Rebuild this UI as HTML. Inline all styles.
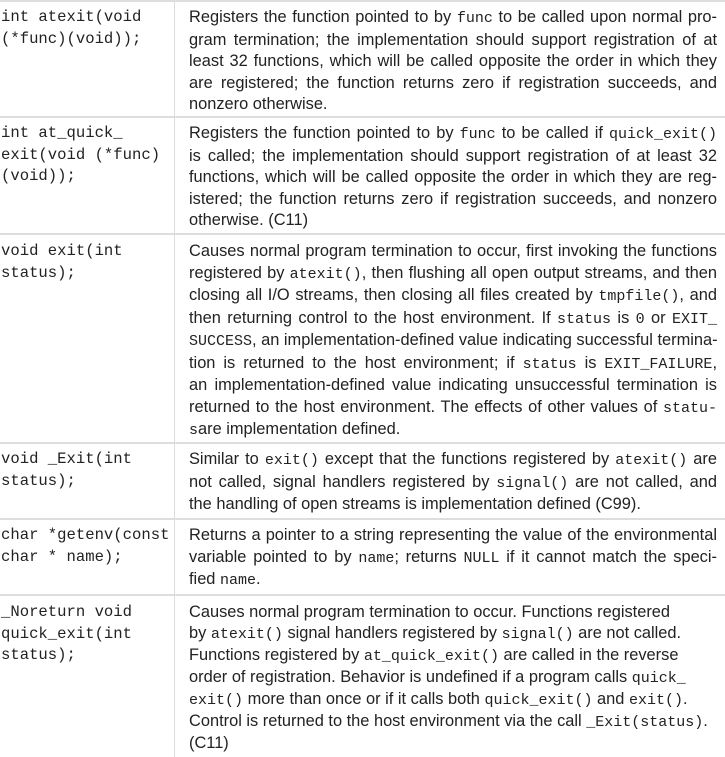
<!DOCTYPE html>
<html><head><meta charset="utf-8"><style>
*{margin:0;padding:0;box-sizing:border-box}
body{width:725px;height:757px;background:#fff;overflow:hidden;font-family:"Liberation Sans",Arial,sans-serif;color:#222}
.row{position:absolute;left:0;width:725px;border-top:2px solid #ddd}
.l{position:absolute;left:1px;top:5px;width:172px;font-family:"Liberation Mono","Courier New",monospace;font-size:15.6px;line-height:21.5px;color:#222}
.v{position:absolute;left:174px;top:0;bottom:0;border-left:1px solid #ddd}
.r{position:absolute;left:189px;top:5px;width:528px;font-size:16.4px;line-height:21.5px}
.r div{text-align:justify;text-align-last:justify;white-space:nowrap;}
.r div.e{text-align-last:left}
.r.left div{text-align-last:left}
code{font-family:"Liberation Mono","Courier New",monospace;font-size:15px}
</style></head><body>

<div class="row" style="top:0;height:116px"><div class="v"></div>
<div class="l">int atexit(void<br>(*func)(void));</div>
<div class="r">
<div>Registers the function pointed to by <code>func</code> to be called upon normal pro-</div>
<div>gram termination; the implementation should support registration of at</div>
<div>least 32 functions, which will be called opposite the order in which they</div>
<div>are registered; the function returns zero if registration succeeds, and</div>
<div class="e">nonzero otherwise.</div>
</div></div>

<div class="row" style="top:116px;height:117px"><div class="v"></div>
<div class="l">int at_quick_<br>exit(void (*func)<br>(void));</div>
<div class="r">
<div>Registers the function pointed to by <code>func</code> to be called if <code>quick_exit()</code></div>
<div>is called; the implementation should support registration of at least 32</div>
<div>functions, which will be called opposite the order in which they are reg-</div>
<div>istered; the function returns zero if registration succeeds, and nonzero</div>
<div class="e">otherwise. (C11)</div>
</div></div>

<div class="row" style="top:233px;height:209px"><div class="v"></div>
<div class="l" style="top:6px">void exit(int<br>status);</div>
<div class="r" style="top:6px">
<div>Causes normal program termination to occur, first invoking the functions</div>
<div>registered by <code>atexit()</code>, then flushing all open output streams, and then</div>
<div>closing all I/O streams, then closing all files created by <code>tmpfile()</code>, and</div>
<div>then returning control to the host environment. If <code>status</code> is <code>0</code> or <code>EXIT_</code></div>
<div><code>SUCCESS</code>, an implementation-defined value indicating successful termina-</div>
<div>tion is returned to the host environment; if <code>status</code> is <code>EXIT_FAILURE</code>,</div>
<div>an implementation-defined value indicating unsuccessful termination is</div>
<div>returned to the host environment. The effects of other values of <code>statu-</code></div>
<div class="e"><code>s</code>are implementation defined.</div>
</div></div>

<div class="row" style="top:442px;height:76px"><div class="v"></div>
<div class="l">void _Exit(int<br>status);</div>
<div class="r">
<div>Similar to <code>exit()</code> except that the functions registered by <code>atexit()</code> are</div>
<div>not called, signal handlers registered by <code>signal()</code> are not called, and</div>
<div class="e">the handling of open streams is implementation defined (C99).</div>
</div></div>

<div class="row" style="top:518px;height:76px"><div class="v"></div>
<div class="l">char *getenv(const<br>char * name);</div>
<div class="r">
<div>Returns a pointer to a string representing the value of the environmental</div>
<div>variable pointed to by <code>name</code>; returns <code>NULL</code> if it cannot match the speci-</div>
<div class="e">fied <code>name</code>.</div>
</div></div>

<div class="row" style="top:594px;height:163px"><div class="v"></div>
<div class="l" style="top:6px">_Noreturn void<br>quick_exit(int<br>status);</div>
<div class="r left" style="top:6px;line-height:21px">
<div>Causes normal program termination to occur. Functions registered</div>
<div>by <code>atexit()</code> signal handlers registered by <code>signal()</code> are not called.</div>
<div>Functions registered by <code>at_quick_exit()</code> are called in the reverse</div>
<div>order of registration. Behavior is undefined if a program calls <code>quick_</code></div>
<div><code>exit()</code> more than once or if it calls both <code>quick_exit()</code> and <code>exit()</code>.</div>
<div>Control is returned to the host environment via the call <code>_Exit(status)</code>.</div>
<div>(C11)</div>
</div></div>

</body></html>
